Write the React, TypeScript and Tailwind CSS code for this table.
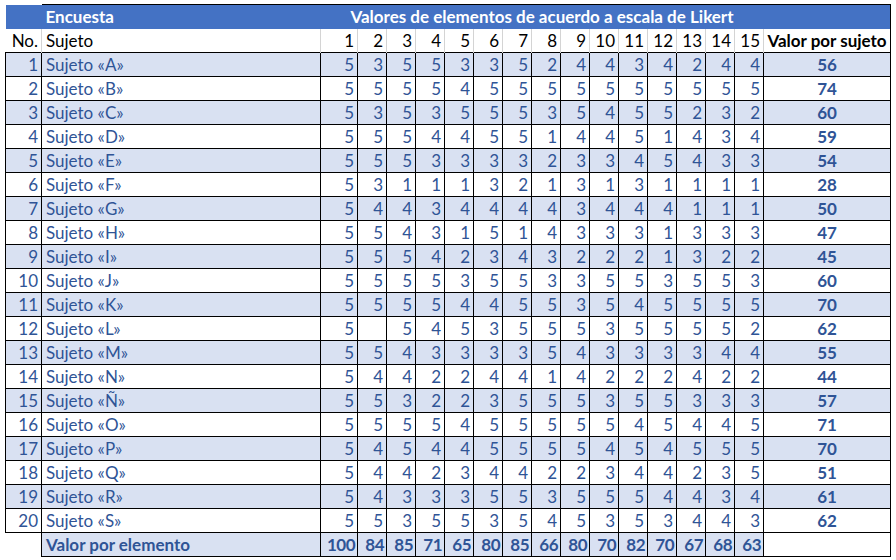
const rows: { name: string; vals: (number | null)[]; total: number }[] = [
  { name: "A", vals: [5, 3, 5, 5, 3, 3, 5, 2, 4, 4, 3, 4, 2, 4, 4], total: 56 },
  { name: "B", vals: [5, 5, 5, 5, 4, 5, 5, 5, 5, 5, 5, 5, 5, 5, 5], total: 74 },
  { name: "C", vals: [5, 3, 5, 3, 5, 5, 5, 3, 5, 4, 5, 5, 2, 3, 2], total: 60 },
  { name: "D", vals: [5, 5, 5, 4, 4, 5, 5, 1, 4, 4, 5, 1, 4, 3, 4], total: 59 },
  { name: "E", vals: [5, 5, 5, 3, 3, 3, 3, 2, 3, 3, 4, 5, 4, 3, 3], total: 54 },
  { name: "F", vals: [5, 3, 1, 1, 1, 3, 2, 1, 3, 1, 3, 1, 1, 1, 1], total: 28 },
  { name: "G", vals: [5, 4, 4, 3, 4, 4, 4, 4, 3, 4, 4, 4, 1, 1, 1], total: 50 },
  { name: "H", vals: [5, 5, 4, 3, 1, 5, 1, 4, 3, 3, 3, 1, 3, 3, 3], total: 47 },
  { name: "I", vals: [5, 5, 5, 4, 2, 3, 4, 3, 2, 2, 2, 1, 3, 2, 2], total: 45 },
  { name: "J", vals: [5, 5, 5, 5, 3, 5, 5, 3, 3, 5, 5, 3, 5, 5, 3], total: 60 },
  { name: "K", vals: [5, 5, 5, 5, 4, 4, 5, 5, 3, 5, 4, 5, 5, 5, 5], total: 70 },
  { name: "L", vals: [5, null, 5, 4, 5, 3, 5, 5, 5, 3, 5, 5, 5, 5, 2], total: 62 },
  { name: "M", vals: [5, 5, 4, 3, 3, 3, 3, 5, 4, 3, 3, 3, 3, 4, 4], total: 55 },
  { name: "N", vals: [5, 4, 4, 2, 2, 4, 4, 1, 4, 2, 2, 2, 4, 2, 2], total: 44 },
  { name: "Ñ", vals: [5, 5, 3, 2, 2, 3, 5, 5, 5, 3, 5, 5, 3, 3, 3], total: 57 },
  { name: "O", vals: [5, 5, 5, 5, 4, 5, 5, 5, 5, 5, 4, 5, 4, 4, 5], total: 71 },
  { name: "P", vals: [5, 4, 5, 4, 4, 5, 5, 5, 5, 4, 5, 4, 5, 5, 5], total: 70 },
  { name: "Q", vals: [5, 4, 4, 2, 3, 4, 4, 2, 2, 3, 4, 4, 2, 3, 5], total: 51 },
  { name: "R", vals: [5, 4, 3, 3, 3, 5, 5, 3, 5, 5, 5, 4, 4, 3, 4], total: 61 },
  { name: "S", vals: [5, 5, 3, 5, 5, 3, 5, 4, 5, 3, 5, 3, 4, 4, 3], total: 62 },
]

const footer = [100, 84, 85, 71, 65, 80, 85, 66, 80, 70, 82, 70, 67, 68, 63]
const cols = Array.from({ length: 15 }, (_, i) => i + 1)

export default function App() {
  return (
    <div className="h-[560px] w-[896px] overflow-hidden bg-white pl-[5px] pt-[4px] font-['Lato','Liberation_Sans',sans-serif] text-[17px] leading-none">
      <table className="table-fixed border-collapse">
        <colgroup>
          <col className="w-[36px]" />
          <col className="w-[279px]" />
          <col className="w-[37px]" />
          {cols.slice(1).map((c) => (
            <col key={c} className="w-[29px]" />
          ))}
          <col className="w-[127px]" />
        </colgroup>
        <tbody>
          {/* Title row */}
          <tr className="h-[24px] bg-[#4472c4] font-bold text-white">
            <td className="p-0" />
            <td className="border-t border-black px-[4px] text-left">Encuesta</td>
            <td colSpan={15} className="border-t border-black p-0 text-center">
              Valores de elementos de acuerdo a escala de Likert
            </td>
            <td className="border-t border-r border-black p-0" />
          </tr>

          {/* Header row */}
          <tr className="h-[24px] text-black">
            <td className="border-r border-[#d4d4d4] px-[3px] text-right">No.</td>
            <td className="border-r border-[#d4d4d4] px-[4px] text-left">Sujeto</td>
            {cols.map((c) => (
              <td key={c} className="border-r border-[#d4d4d4] px-[3px] text-right">
                {c}
              </td>
            ))}
            <td className="whitespace-nowrap border-r border-black p-0 text-center font-bold">Valor por sujeto</td>
          </tr>

          {/* Data rows */}
          {rows.map((r, i) => (
            <tr
              key={r.name}
              className={`h-[24px] text-[#2f5496] ${i % 2 === 0 ? "bg-[#d9e1f2]" : "bg-white"}`}
            >
              <td className="border border-black px-[3px] text-right">{i + 1}</td>
              <td className="border border-black px-[4px] text-left">Sujeto «{r.name}»</td>
              {r.vals.map((v, j) => (
                <td key={j} className="border border-black px-[3px] text-right">
                  {v ?? ""}
                </td>
              ))}
              <td className="border border-black text-center font-bold">{r.total}</td>
            </tr>
          ))}

          {/* Footer row */}
          <tr className="h-[24px] font-bold text-[#2f5496]">
            <td className="border-r border-black bg-white p-0" />
            <td className="border border-black bg-[#d9e1f2] px-[4px] text-left">Valor por elemento</td>
            {footer.map((v, j) => (
              <td key={j} className="whitespace-nowrap border border-black bg-[#d9e1f2] px-[2px] text-right tracking-[-0.5px]">
                {v}
              </td>
            ))}
            <td className="border border-black bg-white" />
          </tr>
        </tbody>
      </table>
    </div>
  )
}
